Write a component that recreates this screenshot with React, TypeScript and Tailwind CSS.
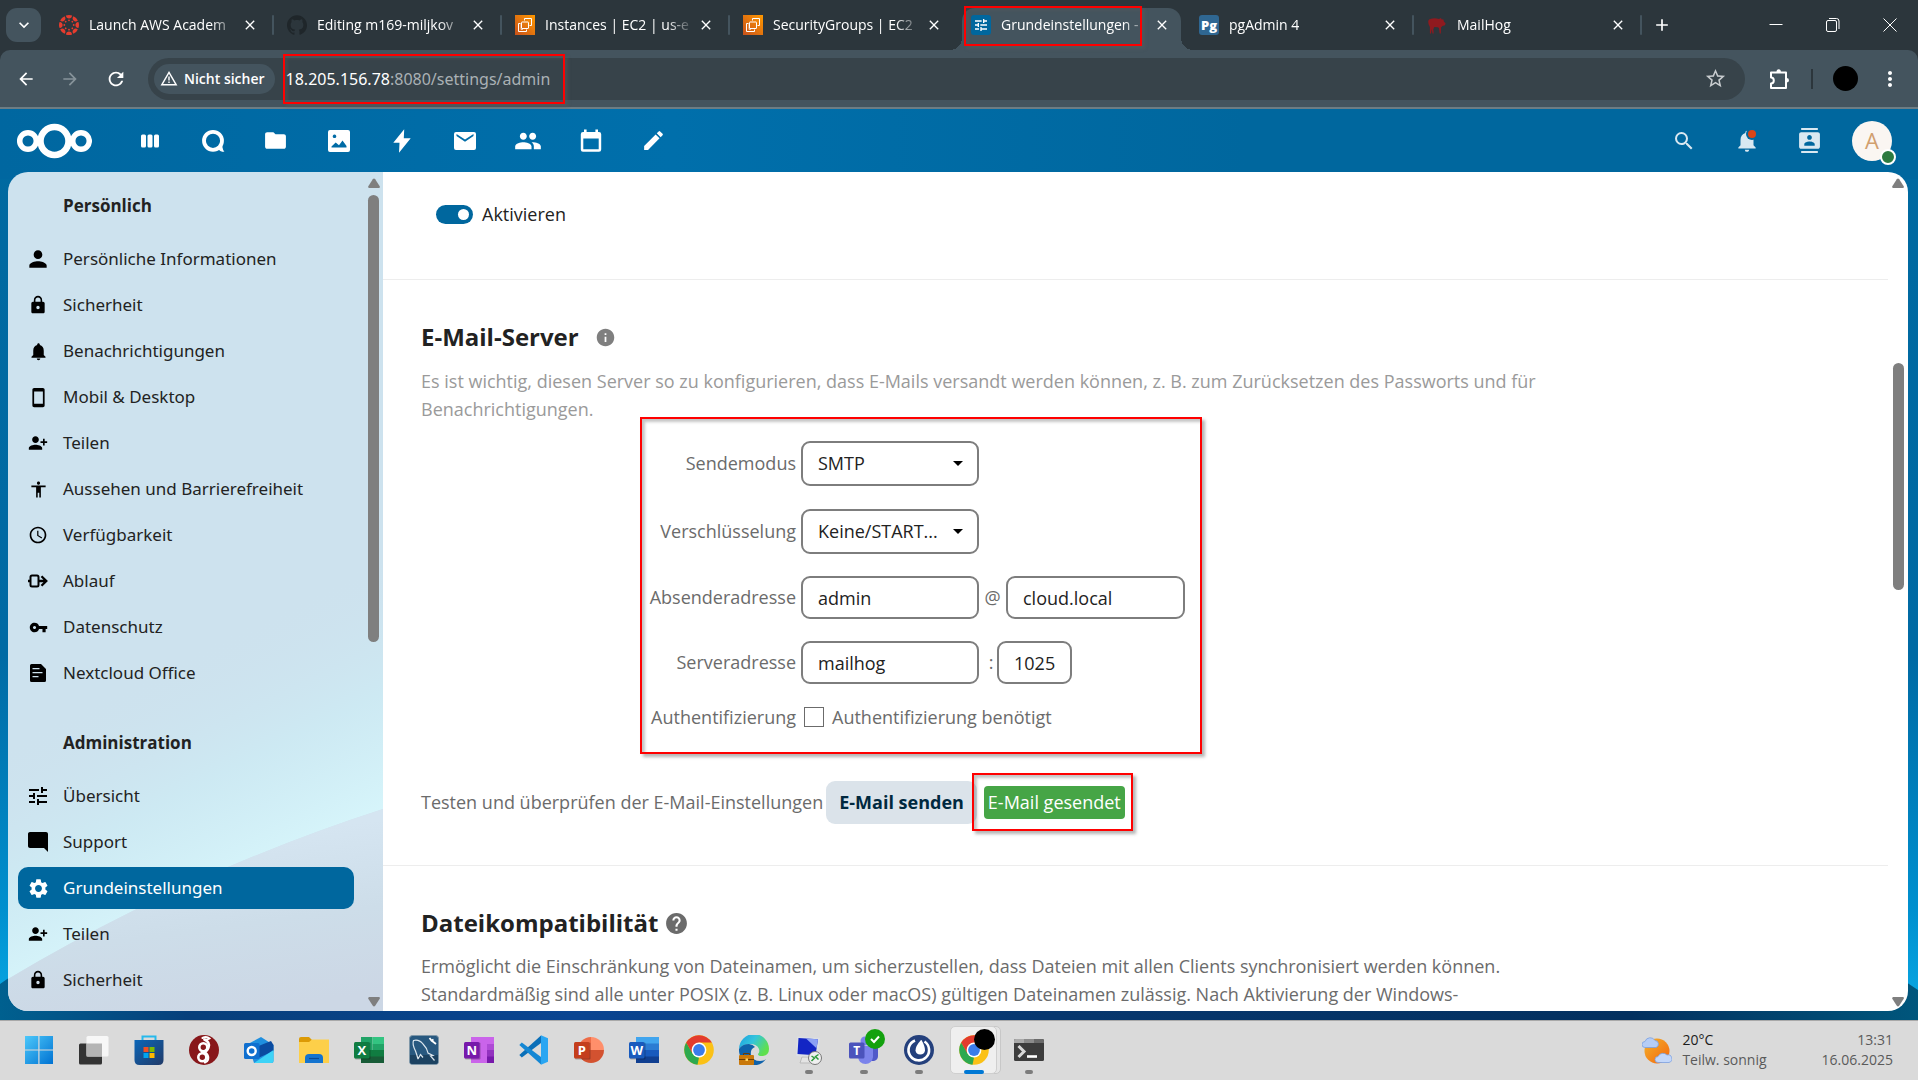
import React from "react";
import {
  MdAccessibility,
  MdAccessTime,
  MdClose,
  MdContacts,
  MdEdit,
  MdFolder,
  MdHelp,
  MdInfo,
  MdLock,
  MdModeComment,
  MdMoreVert,
  MdNotifications,
  MdPeople,
  MdPerson,
  MdPersonAddAlt1,
  MdSearch,
  MdSettings,
  MdStarBorder,
  MdStayCurrentPortrait,
  MdTune,
  MdVpnKey,
  MdAdd,
  MdArrowBack,
  MdArrowForward,
  MdRefresh,
  MdKeyboardArrowDown,
} from "react-icons/md";
import { SiGithub } from "react-icons/si";

/* ---------- shared ---------- */

function Highlight({ className }: { className: string }) {
  return (
    <span
      aria-hidden="true"
      className={`pointer-events-none absolute z-10 border-2 border-[#ff0000] shadow-[3px_3px_3px_rgba(90,90,90,0.45),inset_3px_3px_3px_rgba(90,90,90,0.35)] ${className}`}
    />
  );
}

function Arrow({ down, className = "" }: { down?: boolean; className?: string }) {
  return (
    <svg viewBox="0 0 12 10" className={`h-[10px] w-[12px] ${className}`} fill="#7f7f7f">
      {down ? (
        <path d="M1.2 0h9.600q1.600 .3 .9 1.800L7.200 8.800q-1.200 1.600-2.400 0L.3 1.800Q-.2 .3 1.200 0z" />
      ) : (
        <path d="M1.200 10h9.600q1.600-.3 .9-1.800L7.200 1.200q-1.200-1.600-2.400 0L.3 8.200Q-.2 9.700 1.200 10z" />
      )}
    </svg>
  );
}

/* ---------- browser chrome ---------- */

function CanvasIcon() {
  const spokes = [0, 45, 90, 135, 180, 225, 270, 315];
  return (
    <svg viewBox="0 0 20 20" className="h-5 w-5" fill="#e63c2e">
      {spokes.map((a) => (
        <g key={a} transform={`rotate(${a} 10 10)`}>
          <path d="M6.900 .6Q10-.6 13.100 .6Q12.700 3.600 10 3.600T6.900 .6z" />
          <circle cx="10" cy="5.300" r=".9" />
        </g>
      ))}
    </svg>
  );
}

function Ec2Icon() {
  return (
    <svg viewBox="0 0 20 20" className="h-5 w-5">
      <defs>
        <linearGradient id="ec2" x1="0" y1="1" x2="1" y2="0">
          <stop offset="0" stopColor="#c8511b" />
          <stop offset="1" stopColor="#ff9900" />
        </linearGradient>
      </defs>
      <rect width="20" height="20" fill="url(#ec2)" />
      <g fill="none" stroke="#fff" strokeWidth="1">
        <path d="M5.500 8.500h-2v8h8v-2" />
        <rect x="6.500" y="7" width="7" height="6.500" rx=".5" />
        <path d="M9.500 5.500v-2h7v7h-2" />
        <path d="M8 14.500h-2v-6" opacity=".6" />
      </g>
    </svg>
  );
}

function NextcloudTabIcon() {
  return (
    <span className="flex h-5 w-5 items-center justify-center rounded-[3px] bg-[#00679e] text-white">
      <MdTune size={16} />
    </span>
  );
}

function PgIcon() {
  return (
    <span className="flex h-5 w-5 items-center justify-center rounded-[3px] bg-[#2f6792] text-[13px] leading-none font-extrabold text-white">
      Pg
    </span>
  );
}

function HogIcon() {
  return (
    <svg viewBox="0 0 20 20" className="h-5 w-5" fill="#8f1a1f">
      <path d="M1.200 6Q1.500 4 4 3.700Q8 2.600 12 4L14 3 14.600 4.400 16.300 4.200 17 6.800 18.600 8.200 18 10.300 15.400 10.900 14 12.400 13.800 18.500H12.700L12 13 10.800 12.300 7.300 12 6.300 14.200 6.700 18.500H5.500L4.700 14 4 18.500H2.900L2.900 12Q1 9.500 1.200 6z" />
    </svg>
  );
}

const tabs = [
  { title: "Launch AWS Academ", icon: <CanvasIcon />, sep: true },
  { title: "Editing m169-miljkov", icon: <SiGithub size={20} color="#1f262a" />, sep: true },
  { title: "Instances | EC2 | us-e", icon: <Ec2Icon />, sep: true },
  { title: "SecurityGroups | EC2", icon: <Ec2Icon />, sep: false },
  { title: "Grundeinstellungen -", icon: <NextcloudTabIcon />, sep: false, active: true },
  { title: "pgAdmin 4", icon: <PgIcon />, sep: true },
  { title: "MailHog", icon: <HogIcon />, sep: true },
];

function TabStrip() {
  return (
    <div className="flex h-[50px] shrink-0 items-stretch bg-[#2c363c] pl-[6px] text-white">
      <button
        aria-label="Tabs durchsuchen"
        className="mt-2 mr-[5px] flex h-[34px] w-[35px] shrink-0 items-center justify-center rounded-[11px] bg-[#44545e]"
      >
        <MdKeyboardArrowDown size={20} />
      </button>
      <div className="flex min-w-0 flex-1" role="tablist">
        {tabs.map((t) => (
          <div key={t.title} className="relative flex max-w-[228px] min-w-0 flex-1 items-center pr-3 pl-[13px]">
            {t.active && (
              <>
                <span className="absolute top-2 right-[5px] bottom-0 left-1 rounded-t-[13px] bg-[#44545e]" />
                <span className="absolute bottom-0 -left-2 h-3 w-3 bg-[radial-gradient(circle_at_0_0,#2c363c_12px,#44545e_12px)]" />
                <span className="absolute -right-[7px] bottom-0 h-3 w-3 bg-[radial-gradient(circle_at_100%_0,#2c363c_12px,#44545e_12px)]" />
                <Highlight className="top-[6px] right-[44px] bottom-1 left-[6px]" />
              </>
            )}
            <button role="tab" className="relative flex min-w-0 flex-1 items-center text-left">
              <span className="shrink-0">{t.icon}</span>
              <span className="ml-[10px] min-w-0 flex-1 overflow-hidden pb-px text-[14px] leading-5 whitespace-nowrap [mask-image:linear-gradient(to_right,#000_82%,transparent)]">
                {t.title}
              </span>
            </button>
            <button aria-label="Tab schließen" className="relative flex h-6 w-6 shrink-0 items-center justify-center">
              <MdClose size={16} />
            </button>
            {t.sep && <span className="absolute top-[15px] right-0 h-5 w-[2px] rounded bg-[#44545e]" />}
          </div>
        ))}
        <button aria-label="Neuer Tab" className="ml-2 flex w-6 items-center justify-center">
          <MdAdd size={20} />
        </button>
      </div>
      <div className="flex items-center text-white">
        <button aria-label="Minimieren" className="flex h-full w-[57px] items-center justify-center">
          <svg viewBox="0 0 14 14" className="h-[14px] w-[14px]" stroke="currentColor" fill="none">
            <path d="M.5 6.500h13" />
          </svg>
        </button>
        <button aria-label="Wiederherstellen" className="flex h-full w-[57px] items-center justify-center">
          <svg viewBox="0 0 14 14" className="h-[14px] w-[14px]" stroke="currentColor" fill="none">
            <rect x=".5" y="2.500" width="10" height="11" rx="1.500" />
            <path d="M3 .5h7.500q2.500 0 2.500 2.500v8" />
          </svg>
        </button>
        <button aria-label="Schließen" className="flex h-full w-[57px] items-center justify-center">
          <svg viewBox="0 0 14 14" className="h-[14px] w-[14px]" stroke="currentColor" fill="none">
            <path d="M.5 .5l13 13M13.500 .5l-13 13" />
          </svg>
        </button>
      </div>
    </div>
  );
}

function Toolbar() {
  return (
    <div className="shrink-0 bg-[#2c363c]">
      <div className="flex h-[59px] items-center rounded-t-[10px] border-b-2 border-[#6d7d84] bg-[#44545e] pr-[14px] pl-3 text-white">
        <button aria-label="Zurück" className="flex h-7 w-7 items-center justify-center">
          <MdArrowBack size={20} />
        </button>
        <button aria-label="Vorwärts" className="ml-4 flex h-7 w-7 items-center justify-center text-[#87939a]">
          <MdArrowForward size={20} />
        </button>
        <button aria-label="Neu laden" className="ml-[18px] flex h-7 w-7 items-center justify-center">
          <MdRefresh size={22} />
        </button>
        <div className="ml-[18px] flex h-[42px] min-w-0 flex-1 items-center rounded-full bg-[#37434a] pr-[18px] pl-[6px]">
          <button className="flex h-[30px] items-center gap-[6px] rounded-full bg-[#44545e] px-[6px] pr-[10px] text-[14px] font-semibold whitespace-nowrap">
            <svg viewBox="0 0 18 16" className="h-[15px] w-[18px]" fill="none" stroke="currentColor" strokeWidth="1.500">
              <path d="M9 1.500L16.700 14.700H1.300z" />
              <path d="M9 5.800v4.400M9 11.300v1.500" />
            </svg>
            Nicht sicher
          </button>
          <div className="relative ml-[11px] flex h-full min-w-0 items-center font-['Noto_Sans',sans-serif] text-[16px] whitespace-nowrap text-[#aab1b5]">
            <span className="text-white">18.205.156.78</span>:8080/settings/admin
            <Highlight className="-top-1 -right-[15px] -bottom-1 -left-[3px]" />
          </div>
          <button aria-label="Lesezeichen" className="ml-auto flex h-6 w-6 items-center justify-center text-[#c8cccf]">
            <MdStarBorder size={23} />
          </button>
        </div>
        <button aria-label="Erweiterungen" className="ml-5 flex h-7 w-7 items-center justify-center">
          <svg viewBox="0 0 22 22" className="h-[22px] w-[22px]" fill="none" stroke="currentColor" strokeWidth="2">
            <path d="M3 4.500h15v15.500H3v-4.500q2.800 0 2.800-3T3 9.500z" strokeLinejoin="round" />
            <path d="M8.500 4a2.200 2.800 0 0 1 4.400 0zM18.500 10a2.500 2.200 0 0 1 0 4.400z" fill="currentColor" stroke="none" />
          </svg>
        </button>
        <span className="ml-[18px] h-5 w-[2px] bg-[#2c363c]" />
        <button aria-label="Profil" className="ml-5 h-[25px] w-[25px] rounded-full bg-black" />
        <button aria-label="Menü" className="ml-[18px] flex h-7 w-7 items-center justify-center">
          <MdMoreVert size={24} />
        </button>
      </div>
    </div>
  );
}

/* ---------- Nextcloud header ---------- */

const appLinks: { label: string; icon: React.ReactNode }[] = [
  {
    label: "Dashboard",
    icon: (
      <svg viewBox="0 0 24 24" className="h-6 w-6" fill="currentColor">
        <rect x="3" y="5.500" width="5" height="13" rx="1.500" />
        <rect x="9.500" y="5.500" width="5" height="13" rx="1.500" />
        <rect x="16" y="5.500" width="5" height="13" rx="1.500" />
      </svg>
    ),
  },
  {
    label: "Talk",
    icon: (
      <svg viewBox="0 0 24 24" className="h-6 w-6" fill="none" stroke="currentColor" strokeWidth="3.800">
        <circle cx="12" cy="11.800" r="9" />
        <path d="M16.500 18l3 3.500q2 1 2.800 .6-1-.8-1.700-5.600" fill="currentColor" strokeWidth="1.200" />
      </svg>
    ),
  },
  { label: "Dateien", icon: <MdFolder size={25} /> },
  {
    label: "Fotos",
    icon: (
      <svg viewBox="0 0 24 24" className="h-6 w-6" fill="currentColor" fillRule="evenodd">
        <path d="M3 1h18q2 0 2 2v18q0 2-2 2H3q-2 0-2-2V3q0-2 2-2zM7.500 5.500a1.800 1.800 0 1 0 .01 0zM4.500 18.500h15v-1.500l-4-5.500-3.500 4.800-3.300-2.800-4.200 4z" />
      </svg>
    ),
  },
  {
    label: "Aktivität",
    icon: (
      <svg viewBox="0 0 24 24" className="h-6 w-6" fill="currentColor">
        <path d="M14.200 .3L3.300 13.800h6.200L9 23.700 20.700 9.300h-6.900z" />
      </svg>
    ),
  },
  {
    label: "E-Mail",
    icon: (
      <svg viewBox="0 0 24 24" className="h-6 w-6" fill="currentColor" fillRule="evenodd">
        <path d="M3 3h18q2 0 2 2v14q0 2-2 2H3q-2 0-2-2V5q0-2 2-2zM3.500 5v2l8.500 5.800L20.500 7V5L12 10.600z" />
      </svg>
    ),
  },
  { label: "Kontakte", icon: <MdPeople size={28} /> },
  {
    label: "Kalender",
    icon: (
      <svg viewBox="0 0 24 24" className="h-6 w-6" fill="currentColor" fillRule="evenodd">
        <path d="M5 .5h2.600V3h8.800V.5H19V3h1q2.200 0 2.200 2.200v15.300q0 2.200-2.200 2.200H4q-2.200 0-2.200-2.200V5.200Q1.800 3 4 3h1zM4.300 9.500v10.700h15.400V9.500z" />
      </svg>
    ),
  },
  { label: "Notizen", icon: <MdEdit size={25} /> },
];

function NextcloudHeader() {
  return (
    <header className="relative flex h-[63px] shrink-0 items-center pr-[26px] pl-4 text-white">
      <a href="#" aria-label="Nextcloud" className="mr-[26px]">
        <svg viewBox="0 0 76 36" className="h-9 w-[76px]" fill="none" stroke="currentColor">
          <circle cx="38.500" cy="18" r="14" strokeWidth="6.500" />
          <circle cx="12" cy="18" r="8.300" strokeWidth="5.500" />
          <circle cx="65" cy="18" r="8.300" strokeWidth="5.500" />
        </svg>
      </a>
      <nav className="flex">
        {appLinks.map((a) => (
          <a key={a.label} href="#" aria-label={a.label} className="flex h-12 w-[63px] items-center justify-center">
            {a.icon}
          </a>
        ))}
      </nav>
      <div className="ml-auto flex items-center text-[#d9e8f1]">
        <button aria-label="Suche" className="flex w-[63px] justify-center">
          <MdSearch size={24} />
        </button>
        <button aria-label="Benachrichtigungen" className="relative flex w-[63px] justify-center">
          <MdNotifications size={26} />
          <span className="absolute top-[2px] left-[33px] h-2 w-2 rounded-full bg-[#db4516] ring-2 ring-[#00679e]" />
        </button>
        <button aria-label="Kontaktmenü" className="flex w-[63px] justify-center">
          <MdContacts size={25} />
        </button>
        <button
          aria-label="Konto"
          className="relative ml-[11px] flex h-10 w-10 items-center justify-center rounded-full bg-[#faf6f2] text-[22px] text-[#d19f6e]"
        >
          A
          <span className="absolute -right-1 -bottom-1 h-4 w-4 rounded-full border-2 border-white bg-[#2d7b41]" />
        </button>
      </div>
    </header>
  );
}

/* ---------- sidebar ---------- */

function FlowIcon() {
  return (
    <svg viewBox="0 0 20 20" className="h-5 w-5" fill="none" stroke="currentColor" strokeWidth="2">
      <rect x="2.500" y="4.500" width="8" height="11" rx="1.500" />
      <path d="M0 10h2M11 10h7M13.500 5.200L18.300 10l-4.800 4.800" strokeWidth="2.300" />
    </svg>
  );
}

function DocIcon() {
  return (
    <svg viewBox="0 0 20 20" className="h-5 w-5" fill="currentColor" fillRule="evenodd">
      <path d="M3.500 1h9.500L18 6v11.500q0 1.500-1.500 1.500h-13Q2 19 2 17.500v-15Q2 1 3.500 1zM4.500 5v1.200h7V5zM4.500 9v1.200h10V9zM4.500 13v1.200h6V13z" />
    </svg>
  );
}

const personal = [
  { label: "Persönliche Informationen", icon: <MdPerson size={26} /> },
  { label: "Sicherheit", icon: <MdLock size={20} /> },
  { label: "Benachrichtigungen", icon: <MdNotifications size={21} /> },
  { label: "Mobil & Desktop", icon: <MdStayCurrentPortrait size={21} /> },
  { label: "Teilen", icon: <MdPersonAddAlt1 size={20} /> },
  { label: "Aussehen und Barrierefreiheit", icon: <MdAccessibility size={19} /> },
  { label: "Verfügbarkeit", icon: <MdAccessTime size={20} /> },
  { label: "Ablauf", icon: <FlowIcon /> },
  { label: "Datenschutz", icon: <MdVpnKey size={19} /> },
  { label: "Nextcloud Office", icon: <DocIcon /> },
];

const administration = [
  { label: "Übersicht", icon: <MdTune size={24} /> },
  { label: "Support", icon: <MdModeComment size={24} /> },
  { label: "Grundeinstellungen", icon: <MdSettings size={23} />, active: true },
  { label: "Teilen", icon: <MdPersonAddAlt1 size={20} /> },
  { label: "Sicherheit", icon: <MdLock size={20} /> },
];

type Item = { label: string; icon: React.ReactNode; active?: boolean };

function NavGroup({ title, items }: { title: string; items: Item[] }) {
  return (
    <section>
      <h2 className="pl-[45px] text-[17px] leading-[26px] font-bold text-[#222]">{title}</h2>
      <ul className="mt-[19px] flex flex-col gap-1">
        {items.map((it) => (
          <li key={it.label}>
            <a
              href="#"
              className={`flex h-[42px] items-center rounded-[10px] ${it.active ? "bg-[#00679e] text-white" : "text-[#222]"}`}
            >
              <span className={`flex w-[40px] justify-center ${it.active ? "text-white" : "text-black"}`}>{it.icon}</span>
              <span className="ml-[5px] font-['Noto_Sans',sans-serif] text-[17px] leading-6">{it.label}</span>
            </a>
          </li>
        ))}
      </ul>
    </section>
  );
}

function Sidebar() {
  return (
    <aside className="relative flex w-[375px] shrink-0 overflow-hidden bg-[#cde2ee]">
      <svg viewBox="0 0 375 839" preserveAspectRatio="none" className="absolute inset-0 h-full w-full" aria-hidden="true">
        <defs>
          <linearGradient id="glow" gradientUnits="userSpaceOnUse" x1="100" y1="520" x2="210" y2="740">
            <stop offset="0" stopColor="#cde2ee" stopOpacity="0" />
            <stop offset=".5" stopColor="#cdebf4" stopOpacity=".8" />
            <stop offset="1" stopColor="#d8f7fc" />
          </linearGradient>
          <linearGradient id="fold" x1=".4" y1=".2" x2=".6" y2="1">
            <stop offset="0" stopColor="#d5e5f1" />
            <stop offset=".5" stopColor="#cddde9" />
            <stop offset="1" stopColor="#ccd7e5" />
          </linearGradient>
        </defs>
        <path d="M0 500L375 300V637Q180 700 0 807z" fill="url(#glow)" />
        <path d="M0 807Q180 700 375 637V839H0z" fill="url(#fold)" />
      </svg>
      <nav className="relative flex min-w-0 flex-1 flex-col gap-9 pt-[21px] pr-[14px] pl-[10px]">
        <NavGroup title="Persönlich" items={personal} />
        <NavGroup title="Administration" items={administration} />
      </nav>
      <div className="relative flex w-[15px] shrink-0 flex-col items-start pt-[6px] pb-1">
        <Arrow />
        <span className="mt-[7px] h-[447px] w-[11px] rounded-full bg-[#7f7f7f]" />
        <Arrow down className="mt-auto" />
      </div>
    </aside>
  );
}

/* ---------- settings ---------- */

const fieldClass =
  "w-full rounded-[9px] border-2 border-[#7d7d7d] bg-white pl-[15px] pr-2 text-[18px] text-[#222] outline-none";

function SelectField({ id, value }: { id: string; value: string }) {
  return (
    <div className="relative w-[178px]">
      <select id={id} className={`h-[45px] appearance-none ${fieldClass}`} defaultValue={value}>
        <option>{value}</option>
      </select>
      <svg viewBox="0 0 10 5" className="pointer-events-none absolute top-5 right-4 h-[5px] w-[10px]" fill="#000">
        <path d="M0 0h10L5 5z" />
      </svg>
    </div>
  );
}

function FormRow({ label, htmlFor, children, className = "" }: { label: string; htmlFor: string; children: React.ReactNode; className?: string }) {
  return (
    <div className={`flex items-center ${className}`}>
      <label htmlFor={htmlFor} className="w-[150px] shrink-0 text-right">
        {label}
      </label>
      <div className="ml-[5px] flex items-center">{children}</div>
    </div>
  );
}

function Settings() {
  return (
    <main className="relative flex min-w-0 flex-1 bg-white text-[18px] text-[#6b6b6b]">
      <div className="min-w-0 flex-1 overflow-hidden">
        <section className="h-[107px] pt-[28px] pl-[53px]">
          <label className="flex w-fit items-center gap-[9px] leading-7 text-[#222]">
            <input type="checkbox" role="switch" defaultChecked className="peer sr-only" />
            <span className="flex h-[19px] w-[37px] items-center justify-end rounded-full bg-[#00679e] pr-1">
              <span className="h-[11px] w-[11px] rounded-full bg-white" />
            </span>
            Aktivieren
          </label>
        </section>

        <section className="border-t border-[#ededed] pt-[39px] pb-[41px] pl-[38px]">
          <h2 className="flex items-center gap-4 text-[24px] leading-9 font-bold text-[#222]">
            E-Mail-Server
            <a href="#" aria-label="Dokumentation" className="text-[#7f7f7f]">
              <MdInfo size={21} />
            </a>
          </h2>
          <p className="mt-3 max-w-[1125px] leading-7 text-[#9a9a9a]">
            Es ist wichtig, diesen Server so zu konfigurieren, dass E-Mails versandt werden können, z. B. zum Zurücksetzen des
            Passworts und für Benachrichtigungen.
          </p>

          <form className="relative mt-[18px] ml-[225px] w-fit">
            <Highlight className="-top-6 -right-[17px] -bottom-[23px] -left-[6px]" />
            <FormRow label="Sendemodus" htmlFor="mode">
              <SelectField id="mode" value="SMTP" />
            </FormRow>
            <FormRow label="Verschlüsselung" htmlFor="enc" className="mt-[23px]">
              <SelectField id="enc" value="Keine/START..." />
            </FormRow>
            <FormRow label="Absenderadresse" htmlFor="from" className="mt-[22px]">
              <div className="w-[178px]">
                <input id="from" type="text" defaultValue="admin" className={`h-[43px] ${fieldClass}`} />
              </div>
              <label htmlFor="domain" className="w-[27px] text-center">
                @
              </label>
              <div className="w-[179px]">
                <input id="domain" type="text" defaultValue="cloud.local" className={`h-[43px] ${fieldClass}`} />
              </div>
            </FormRow>
            <FormRow label="Serveradresse" htmlFor="host" className="mt-[22px]">
              <div className="w-[178px]">
                <input id="host" type="text" defaultValue="mailhog" className={`h-[43px] ${fieldClass}`} />
              </div>
              <label htmlFor="port" className="w-[18px] pl-[6px] text-center">
                :
              </label>
              <div className="w-[75px]">
                <input id="port" type="text" defaultValue="1025" className={`h-[43px] ${fieldClass}`} />
              </div>
            </FormRow>
            <FormRow label="Authentifizierung" htmlFor="auth" className="mt-[19px] h-7">
              <input
                id="auth"
                type="checkbox"
                className="ml-[3px] h-5 w-5 appearance-none border border-[#6b6b6b] bg-white"
              />
              <label htmlFor="auth" className="ml-2">
                Authentifizierung benötigt
              </label>
            </FormRow>
          </form>

          <div className="mt-[50px] flex items-center">
            <span>Testen und überprüfen der E-Mail-Einstellungen</span>
            <button className="ml-[3px] h-[43px] rounded-[9px] bg-[#dbe3ea] px-[13px] font-bold text-[#00293f]">E-Mail senden</button>
            <span className="relative ml-[7px] flex h-[33px] items-center rounded-[4px] bg-[#46a546] px-1 text-white">
              E-Mail gesendet
              <Highlight className="-top-[13px] -right-2 -bottom-3 -left-3" />
            </span>
          </div>
        </section>

        <section className="border-t border-[#ededed] pt-[39px] pl-[38px]">
          <h2 className="flex items-center gap-[6px] text-[24px] leading-9 font-bold text-[#222]">
            Dateikompatibilität
            <a href="#" aria-label="Hilfe" className="text-[#6b6b6b]">
              <MdHelp size={25} />
            </a>
          </h2>
          <p className="mt-[11px] max-w-[1125px] leading-7">
            Ermöglicht die Einschränkung von Dateinamen, um sicherzustellen, dass Dateien mit allen Clients synchronisiert werden
            können. Standardmäßig sind alle unter POSIX (z. B. Linux oder macOS) gültigen Dateinamen zulässig. Nach Aktivierung der
            Windows-
          </p>
        </section>
      </div>
      <div className="flex w-5 shrink-0 flex-col items-center pt-[6px] pr-1 pb-1 pl-1">
        <Arrow />
        <span className="mt-[175px] h-[227px] w-[11px] rounded-full bg-[#7f7f7f]" />
        <Arrow down className="mt-auto" />
      </div>
    </main>
  );
}

/* ---------- taskbar ---------- */

function OfficeIcon({ letter, plate, children }: { letter: string; plate: string; children: React.ReactNode }) {
  return (
    <svg viewBox="0 0 30 30" className="h-[30px] w-[30px]">
      {children}
      <rect x="1" y="7.500" width="15.500" height="17" rx="1" fill="#000" opacity=".25" />
      <rect x="0" y="7" width="15.500" height="16.500" rx="1.500" fill={plate} />
      <text x="7.800" y="20" textAnchor="middle" fontSize="13" fontWeight="700" fill="#fff" fontFamily="Open Sans, sans-serif">
        {letter}
      </text>
    </svg>
  );
}

function ChromeIcon() {
  return (
    <svg viewBox="0 0 30 30" className="h-[30px] w-[30px]">
      <circle cx="15" cy="15" r="14.800" fill="#fbc116" />
      <path d="M2.200 7.600L9 19 15 22.400 13.500 29.700A14.800 14.800 0 0 1 2.200 7.600z" fill="#2da94f" />
      <path d="M2.200 7.600A14.800 14.800 0 0 1 27.800 7.600H15L8.200 18z" fill="#e33b2e" />
      <circle cx="15" cy="15" r="7.400" fill="#fff" />
      <circle cx="15" cy="15" r="5.900" fill="#3a7cec" />
    </svg>
  );
}

const svg = "h-[30px] w-[30px]";

const taskbar: { label: string; icon: React.ReactNode; running?: boolean; active?: boolean }[] = [
  {
    label: "Start",
    icon: (
      <svg viewBox="0 0 30 30" className={svg}>
        <defs>
          <linearGradient id="win" x1="0" y1="0" x2="1" y2="1">
            <stop offset="0" stopColor="#4cc8fa" />
            <stop offset="1" stopColor="#0072d2" />
          </linearGradient>
        </defs>
        <path d="M1 1h13.300v13.500H1zM15.500 1H29v13.500H15.500zM1 15.500h13.300V29H1zM15.500 15.500H29V29H15.500z" fill="url(#win)" />
      </svg>
    ),
  },
  {
    label: "Aktive Anwendungen",
    icon: (
      <svg viewBox="0 0 30 30" className={svg}>
        <rect x="0" y="8.500" width="23" height="21" rx="1.500" fill="#333" />
        <rect x="7.500" y="1" width="22" height="20.500" rx="1.500" fill="#f7f7f7" />
        <rect x="7.500" y="8.500" width="15.500" height="13" fill="#b4b4b4" />
      </svg>
    ),
  },
  {
    label: "Microsoft Store",
    icon: (
      <svg viewBox="0 0 30 30" className={svg}>
        <defs>
          <linearGradient id="store" x1="0" y1="0" x2="1" y2="1">
            <stop offset="0" stopColor="#0b66b8" />
            <stop offset="1" stopColor="#213a68" />
          </linearGradient>
        </defs>
        <path d="M8.500 6V1.500h13V6" fill="none" stroke="#26b9ec" strokeWidth="2" />
        <path d="M.5 5h29v20q0 5-5 5h-19q-5 0-5-5z" fill="url(#store)" />
        <path d="M9.500 12h5v5h-5z" fill="#f25022" />
        <path d="M15.500 12h5v5h-5z" fill="#7fba00" />
        <path d="M9.500 18h5v5h-5z" fill="#00a4ef" />
        <path d="M15.500 18h5v5h-5z" fill="#ffb900" />
      </svg>
    ),
  },
  {
    label: "WireGuard",
    icon: (
      <svg viewBox="0 0 30 30" className={svg}>
        <circle cx="15" cy="15" r="15" fill="#88171a" />
        <g fill="none" stroke="#fff" strokeWidth="2.600" strokeLinecap="round">
          <path d="M13.500 3q4-2 7 .5-1.500 1.200-5 1.300" strokeWidth="2" />
          <path d="M15.500 4.500q6 3 4 8-1 3-4 4.500" />
          <circle cx="14.300" cy="12.200" r="4" />
          <circle cx="13.300" cy="22.300" r="4" />
          <path d="M19 13q-1 4-6 5M17 18q3 3 2 6.500-1 2.500-3 3" strokeWidth="2.200" />
        </g>
      </svg>
    ),
  },
  {
    label: "Outlook",
    icon: (
      <svg viewBox="0 0 30 30" className={svg}>
        <path d="M4 9L17 2l12.500 8v16q0 2-2 2H10z" fill="#1f8fdf" />
        <path d="M12 12L27 6l2.500 4v6L12 24z" fill="#0a4ba0" />
        <path d="M10 28l19.500-13v11q0 2-2 2z" fill="#3dd3f7" />
        <rect x="0" y="8" width="15.500" height="16" rx="1.500" fill="#0f6fcf" />
        <circle cx="7.700" cy="16" r="4" fill="none" stroke="#fff" strokeWidth="2.400" />
      </svg>
    ),
  },
  {
    label: "Explorer",
    icon: (
      <svg viewBox="0 0 30 30" className={svg}>
        <path d="M0 4q0-2 2-2h8l3 3v6H0z" fill="#dc9a05" />
        <path d="M0 7h10l3-2.500h17V28H0z" fill="#fdcf49" />
        <path d="M6 28v-5q0-4 4-4h10q4 0 4 4v5z" fill="#1474cf" />
        <path d="M10 23.500h10" stroke="#0a4a94" strokeWidth="1.200" />
      </svg>
    ),
  },
  {
    label: "Excel",
    icon: (
      <OfficeIcon letter="X" plate="#107c41">
        <path d="M7 2h11.500v13H7z" fill="#21a366" />
        <path d="M18.500 2H30v7H18.500z" fill="#33c481" />
        <path d="M18.500 9H30v6.500H18.500z" fill="#21a366" />
        <path d="M7 15h23v7H7z" fill="#107c41" />
        <path d="M7 21.500h23V28H7z" fill="#185c37" />
      </OfficeIcon>
    ),
  },
  {
    label: "MySQL Workbench",
    icon: (
      <svg viewBox="0 0 30 30" className={svg}>
        <rect x=".5" y=".5" width="29" height="29" rx="3" fill="#28587f" stroke="#7f97a8" />
        <path d="M1 20h28v7q0 2-2 2H3q-2 0-2-2z" fill="#1c4261" />
        <path
          d="M9 24q-1-4-2.500-8Q3 9 4.500 5.500 10 4 14 9q4 4 5 9l5 2.500-2.500 .5 4 4.500M9 24l2.500-4.500 2.500 3"
          fill="none"
          stroke="#dce6ee"
          strokeWidth="1.200"
        />
        <path d="M20.500 3l2 2.500 2-1M22.500 5.500L27 9" stroke="#fff" strokeWidth="1.800" fill="none" />
      </svg>
    ),
  },
  {
    label: "OneNote",
    icon: (
      <OfficeIcon letter="N" plate="#7719aa">
        <path d="M7 2h23v26H7z" fill="#ca64ea" />
        <path d="M23 9h7v6.500h-7z" fill="#ae4bd5" />
        <path d="M23 15h7v7h-7z" fill="#9332bf" />
        <path d="M23 21.500h7V28h-7z" fill="#7719aa" />
      </OfficeIcon>
    ),
  },
  {
    label: "Visual Studio Code",
    icon: (
      <svg viewBox="0 0 30 30" className={svg}>
        <path d="M.3 20L2.800 22.600 22 8V.5z" fill="#0a6fb8" />
        <path d="M.3 10L2.800 7.400 22 22v7.500z" fill="#1487d4" />
        <path d="M22 .3l7 3v23.400l-7 3z" fill="#2aa6f2" />
      </svg>
    ),
  },
  {
    label: "PowerPoint",
    icon: (
      <OfficeIcon letter="P" plate="#c43e1c">
        <path d="M17 2A13 13 0 0 0 4 15h13z" fill="#ed6c47" />
        <path d="M17 2a13 13 0 0 1 13 13H17z" fill="#ff8f6b" />
        <path d="M4 15h26a13 13 0 0 1-26 0z" fill="#d35230" />
      </OfficeIcon>
    ),
  },
  {
    label: "Word",
    icon: (
      <OfficeIcon letter="W" plate="#185abd">
        <path d="M7 2h23v7H7z" fill="#41a5ee" />
        <path d="M7 8.500h23V15H7z" fill="#2b7cd3" />
        <path d="M7 15h23v7H7z" fill="#185abd" />
        <path d="M7 21.500h23V28H7z" fill="#103f91" />
      </OfficeIcon>
    ),
  },
  { label: "Chrome", icon: <ChromeIcon /> },
  {
    label: "Edge",
    icon: (
      <svg viewBox="0 0 30 30" className={svg}>
        <defs>
          <linearGradient id="edge" x1="0" y1="0" x2="1" y2=".5">
            <stop offset="0" stopColor="#1c9fe0" />
            <stop offset=".5" stopColor="#34c4dc" />
            <stop offset="1" stopColor="#5fe04d" />
          </linearGradient>
        </defs>
        <path d="M0 14A15 15 0 0 1 30 14q0 6-6 7-5 .5-5-2 2-2 1-5-2-5-9-5Q3 9 0 14z" fill="url(#edge)" />
        <path d="M0 14q3-5 10-5 4 .5 6 3-5 2-4 8 2 6 9 6 4 0 6-2-4 6-12 6A15 15 0 0 1 0 14z" fill="#0f62ab" />
        <rect x="0" y="20" width="15" height="10" rx="1" fill="#c9780a" />
        <path d="M4.500 20v-1.500h6V20M0 24.500h15" stroke="#6b3d03" fill="none" />
        <rect x="6.500" y="23.500" width="2.500" height="2.500" fill="#ffd45c" />
      </svg>
    ),
  },
  {
    label: "Remotedesktop",
    running: true,
    icon: (
      <svg viewBox="0 0 30 30" className={svg}>
        <path d="M8 22h10l2 6H6z" fill="#e4e4e4" stroke="#bbb" />
        <path d="M3 1.500L26 3l-2.500 19L2 21z" fill="#dcdfe4" />
        <path d="M4.500 3l19.500 1.200-2.500 16L3.500 19z" fill="#1325c4" />
        <path d="M12 3.500l12 .8-1.500 9z" fill="#8ba0f5" />
        <circle cx="21" cy="23" r="6.500" fill="#f0f0f0" stroke="#777" />
        <path d="M17.500 21l3 2-3 3M24.500 19.500l-3 2 3 3" stroke="#2d9a3c" strokeWidth="1.500" fill="none" />
      </svg>
    ),
  },
  {
    label: "Teams",
    running: true,
    icon: (
      <span className="relative block">
        <svg viewBox="0 0 30 30" className={svg}>
          <circle cx="16" cy="6" r="4.500" fill="#7b83eb" />
          <path d="M21 12h8v9q0 4-4 5h-4z" fill="#5059c9" />
          <path d="M9 11h15v11q-1 7-7.500 7T9 22z" fill="#7b83eb" />
          <rect x="0" y="7.500" width="15.500" height="16" rx="1.500" fill="#4b53bc" />
          <text x="7.800" y="20" textAnchor="middle" fontSize="12" fontWeight="700" fill="#fff" fontFamily="Open Sans, sans-serif">
            T
          </text>
        </svg>
        <svg viewBox="0 0 20 20" className="absolute -top-[6px] -right-[6px] h-5 w-5">
          <circle cx="10" cy="10" r="10" fill="#13a10e" />
          <path d="M6 10l3 3 5-5.500" stroke="#fff" strokeWidth="2" fill="none" />
        </svg>
      </span>
    ),
  },
  {
    label: "Mattermost",
    running: true,
    icon: (
      <svg viewBox="0 0 30 30" className={svg}>
        <circle cx="15" cy="15" r="15" fill="#24407c" />
        <path d="M11 5.500A10.300 10.300 0 1 0 20.500 6.500" stroke="#fff" strokeWidth="2.600" fill="none" />
        <path d="M17 5q-5.500 6-5.500 10.500a4.800 4.800 0 0 0 9.500 0Q21 11 17.500 5z" fill="#fff" />
      </svg>
    ),
  },
  {
    label: "Chrome – Profil",
    active: true,
    icon: (
      <span className="relative block">
        <ChromeIcon />
        <span className="absolute -top-[6px] -right-[6px] h-[21px] w-[21px] rounded-full bg-black" />
      </span>
    ),
  },
  {
    label: "Terminal",
    running: true,
    icon: (
      <svg viewBox="0 0 30 30" className={svg}>
        <rect x="0" y="4" width="30" height="22" rx="1.500" fill="#3c3c3c" />
        <path d="M0 8V5.500Q0 4 1.500 4H10v4z" fill="#aaa" />
        <path d="M10 4h10v4H10z" fill="#8b8b8b" />
        <path d="M20 4h8.500Q30 4 30 5.500V8H20z" fill="#6a6a6a" />
        <path d="M4.500 11l5.500 5.500L4.500 22" fill="none" stroke="#d8d8d8" strokeWidth="3" />
        <path d="M13 21.500h10" stroke="#fff" strokeWidth="2.600" />
      </svg>
    ),
  },
];

function WeatherIcon() {
  return (
    <svg viewBox="0 0 30 28" className="h-7 w-[30px]">
      <defs>
        <linearGradient id="sun" x1="0" y1="0" x2="1" y2="1">
          <stop offset="0" stopColor="#f3b22b" />
          <stop offset="1" stopColor="#f4660e" />
        </linearGradient>
      </defs>
      <circle cx="15" cy="15" r="12.500" fill="url(#sun)" />
      <path d="M3 11.500a3 3 0 0 1 0-6 5.500 5.500 0 0 1 10-1 3.600 3.600 0 0 1 1 7z" fill="#b5cdf6" stroke="#7b9fe0" strokeWidth=".8" />
      <path d="M16 26.500a3 3 0 0 1 0-6 5.500 5.500 0 0 1 9-1.500 3.700 3.700 0 0 1 2 7.500z" fill="#c3d7f9" stroke="#7b9fe0" strokeWidth=".8" />
    </svg>
  );
}

function Taskbar() {
  return (
    <footer className="flex h-[60px] shrink-0 items-stretch border-t border-[#a9a9a9] bg-[#dadada] pr-[25px] pb-[2px] pl-[11px]">
      <div className="flex">
        {taskbar.map((t) => (
          <button key={t.label} aria-label={t.label} className="relative flex w-[55px] items-center justify-center">
            {t.active && (
              <>
                <span className="absolute top-[5px] right-0 bottom-1 left-[10px] rounded-[5px] border border-[#c8c8c8] bg-[#e6e6e6]" />
                <span className="absolute top-[5px] right-1 bottom-1 left-1 rounded-[5px] border border-[#cfcfcf] bg-[#efefef]" />
                <span className="absolute bottom-1 left-[18px] h-1 w-5 rounded-full bg-[#0078d4]" />
              </>
            )}
            {t.running && <span className="absolute bottom-1 left-6 h-1 w-2 rounded-full bg-[#7c7c7c]" />}
            <span className="relative">{t.icon}</span>
          </button>
        ))}
      </div>
      <div className="ml-auto flex items-center gap-[10px] text-[14px] leading-5">
        <WeatherIcon />
        <div>
          <div className="text-[#1c1c1c]">20°C</div>
          <div className="text-[#5a5a5a]">Teilw. sonnig</div>
        </div>
      </div>
      <div className="ml-[55px] flex flex-col justify-center text-right text-[14px] leading-5 text-[#5a5a5a]">
        <div>13:31</div>
        <div>16.06.2025</div>
      </div>
    </footer>
  );
}

/* ---------- page ---------- */

function Wallpaper() {
  return (
    <div className="absolute inset-0" aria-hidden="true">
      <div className="h-full bg-[linear-gradient(180deg,#0069a0_0%,#006aa4_60%,#0090cf_88%,#0aaae6_100%)]" />
      <div className="absolute inset-x-0 top-0 h-[70px] bg-[linear-gradient(90deg,#0067a0,#006fab_35%,#00679e_65%,#00679e)]" />
      <svg viewBox="0 0 1918 60" preserveAspectRatio="none" className="absolute inset-x-0 bottom-0 h-[60px] w-full">
        <defs>
          <linearGradient id="floor" x1="0" y1="0" x2="1" y2="0">
            <stop offset="0" stopColor="#00608f" />
            <stop offset=".1" stopColor="#073f7b" />
            <stop offset=".3" stopColor="#0a4592" />
            <stop offset=".55" stopColor="#07376e" />
            <stop offset=".85" stopColor="#03305f" />
            <stop offset="1" stopColor="#00567c" />
          </linearGradient>
        </defs>
        <path d="M0 24L10 17 14 40H1900V18L1918 30V60H0z" fill="url(#floor)" />
      </svg>
    </div>
  );
}

export default function App() {
  return (
    <div className="flex h-screen flex-col overflow-hidden font-['Open_Sans','Noto_Sans',sans-serif]">
      <TabStrip />
      <Toolbar />
      <div className="relative flex min-h-0 flex-1 flex-col">
        <Wallpaper />
        <NextcloudHeader />
        <div className="relative mr-[10px] mb-[9px] ml-2 flex min-h-0 flex-1 overflow-hidden rounded-[20px]">
          <Sidebar />
          <Settings />
        </div>
      </div>
      <Taskbar />
    </div>
  );
}
